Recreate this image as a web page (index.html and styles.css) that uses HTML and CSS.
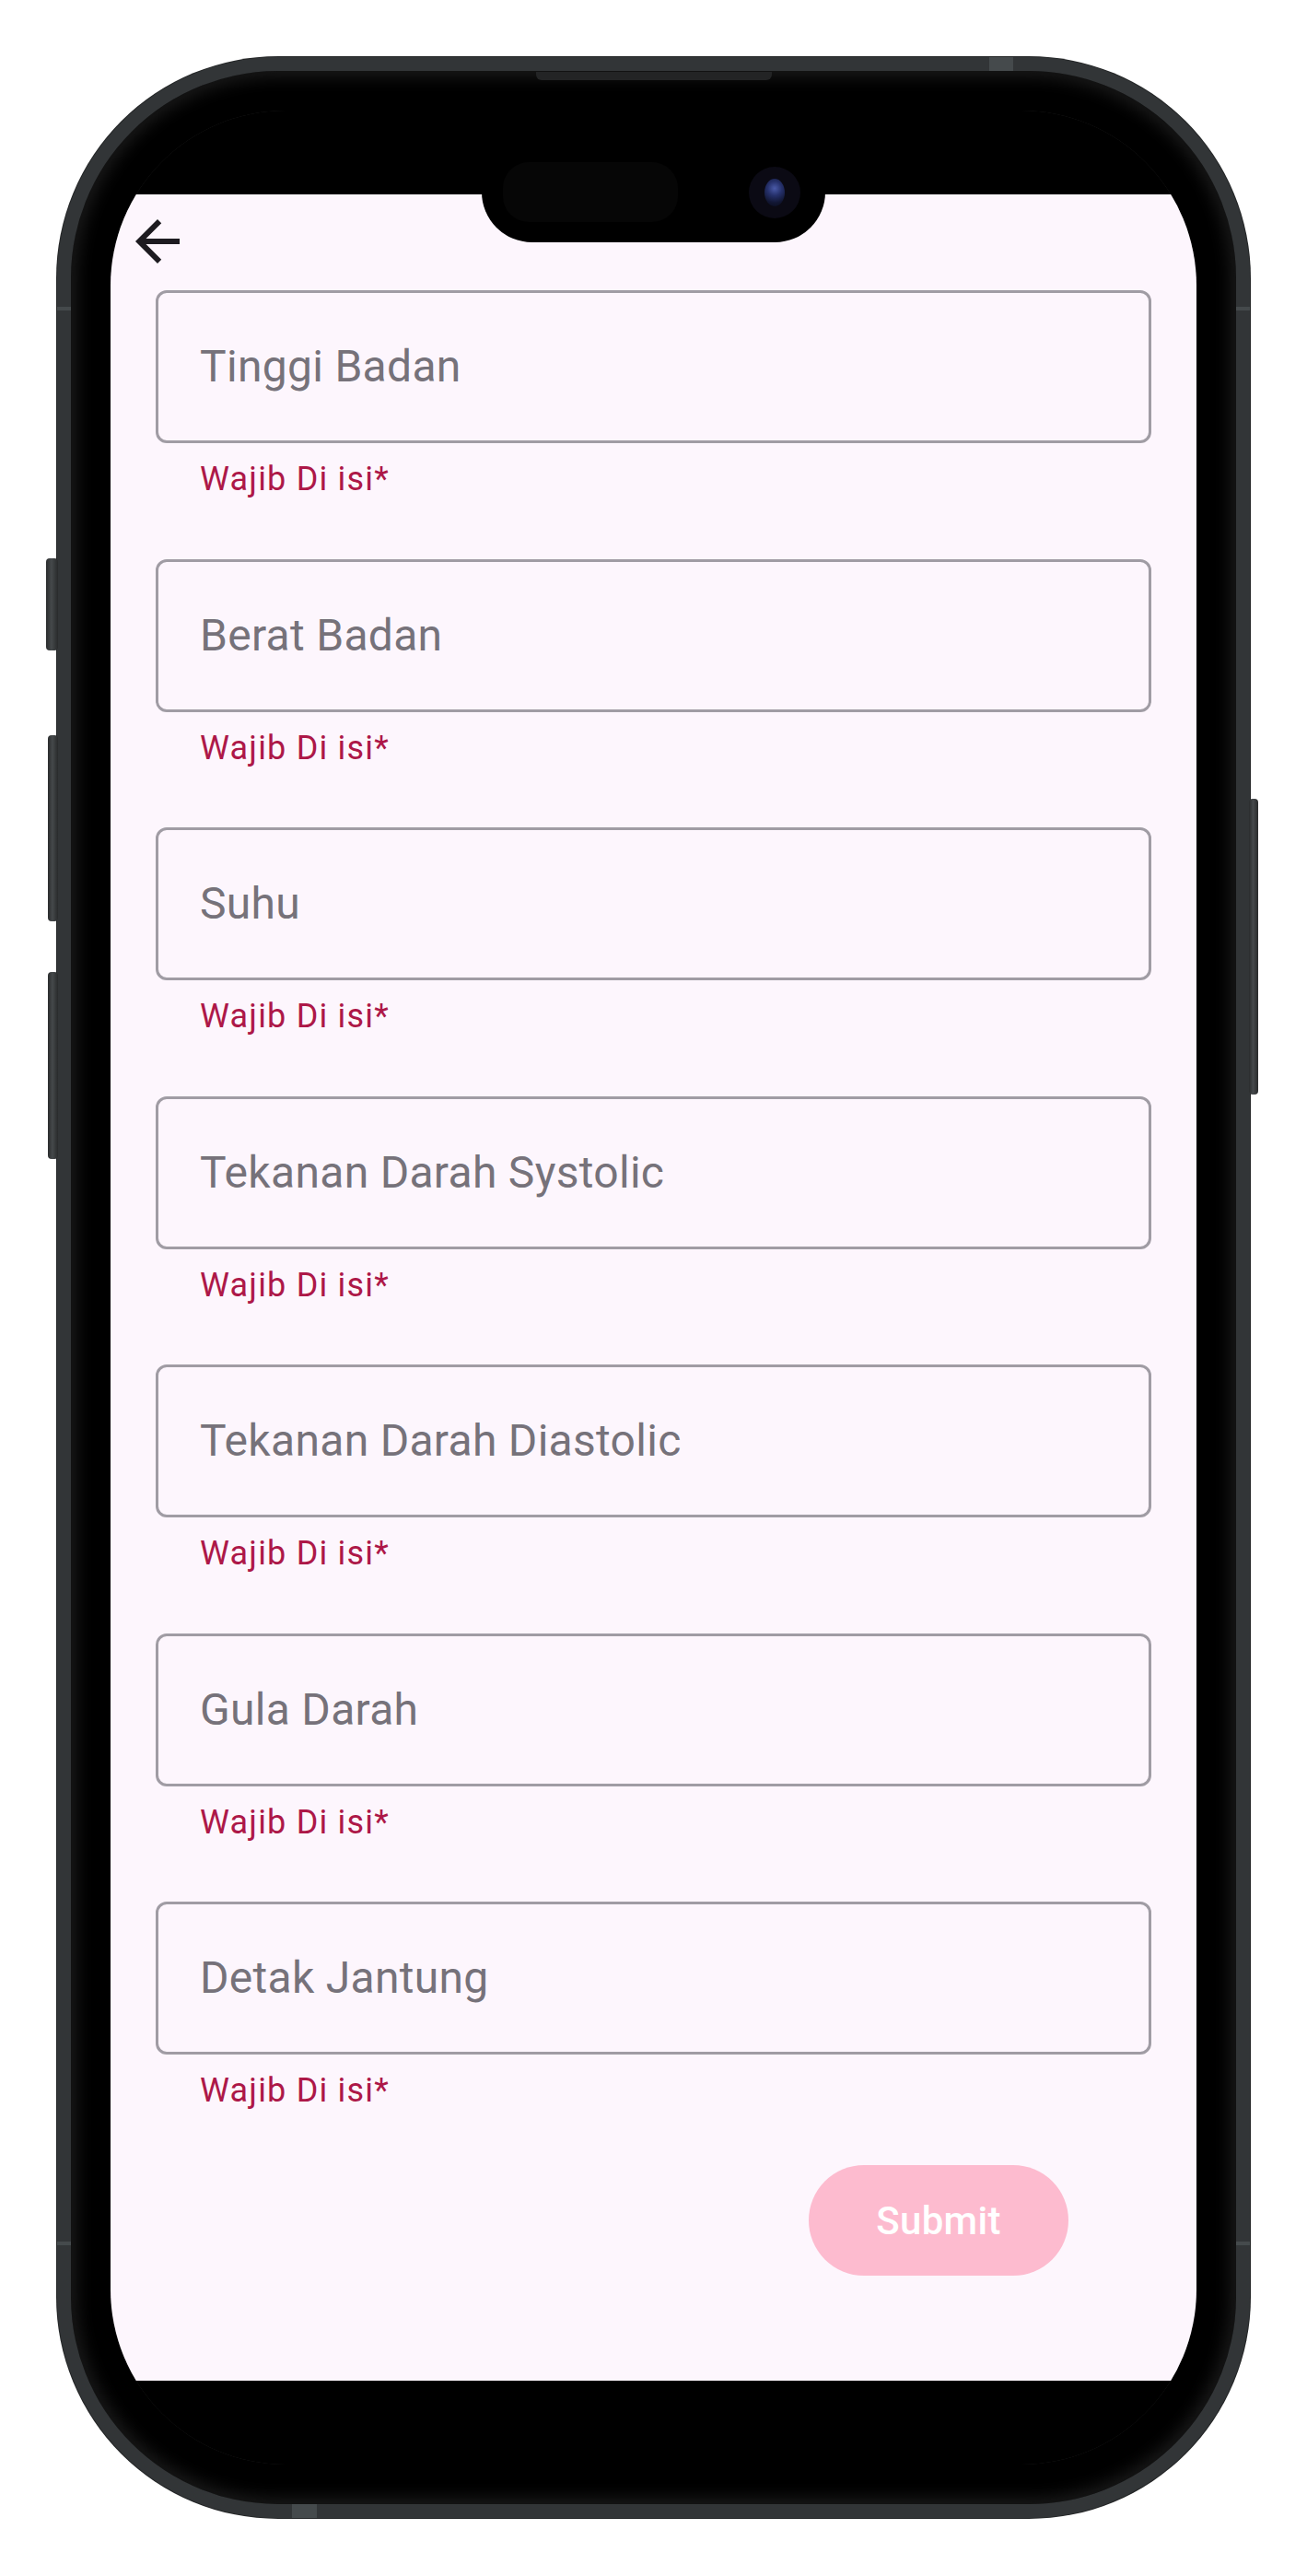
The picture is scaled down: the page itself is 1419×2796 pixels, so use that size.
FILE: index.html
```html
<!DOCTYPE html>
<html lang="id">
<head>
<meta charset="utf-8">
<title>Form</title>
<link rel="stylesheet" href="styles.css">
</head>
<body>
<div class="phone">
  <div class="btn-side btn-action"></div>
  <div class="btn-side btn-vol-up"></div>
  <div class="btn-side btn-vol-down"></div>
  <div class="btn-side btn-power"></div>
  <div class="antenna ant-top"></div>
  <div class="antenna ant-bottom"></div>
  <div class="antenna ant-left1"></div>
  <div class="antenna ant-right1"></div>
  <div class="antenna ant-left2"></div>
  <div class="antenna ant-right2"></div>
  <div class="speaker"></div>
  <div class="display">
    <div class="island">
      <div class="island-sensor"></div>
      <div class="island-cam"><div class="lens"></div></div>
    </div>
    <div class="statusbar"></div>
    <main class="app">
      <div class="topbar">
        <svg class="back" viewBox="0 0 24 24" aria-label="Kembali"><path d="M20 11H7.83l5.59-5.59L12 4l-8 8 8 8 1.41-1.41L7.83 13H20v-2z"/></svg>
      </div>
      <form class="form">
        <div class="group"><div class="field"><span class="label">Tinggi Badan</span></div><div class="support">Wajib Di isi*</div></div>
        <div class="group"><div class="field"><span class="label">Berat Badan</span></div><div class="support">Wajib Di isi*</div></div>
        <div class="group"><div class="field"><span class="label">Suhu</span></div><div class="support">Wajib Di isi*</div></div>
        <div class="group"><div class="field"><span class="label">Tekanan Darah Systolic</span></div><div class="support">Wajib Di isi*</div></div>
        <div class="group"><div class="field"><span class="label">Tekanan Darah Diastolic</span></div><div class="support">Wajib Di isi*</div></div>
        <div class="group"><div class="field"><span class="label">Gula Darah</span></div><div class="support">Wajib Di isi*</div></div>
        <div class="group last"><div class="field"><span class="label">Detak Jantung</span></div><div class="support">Wajib Di isi*</div></div>
        <div class="actions"><button type="button" class="submit">Submit</button></div>
      </form>
    </main>
    <div class="bottombar"></div>
  </div>
</div>
</body>
</html>
```
FILE: styles.css
```css
* { box-sizing: border-box; }
html, body { margin: 0; padding: 0; background: #ffffff; }
body { width: 1419px; height: 2796px; overflow: hidden; font-family: Roboto, "Noto Sans", sans-serif; }

.phone {
  position: relative;
  width: 1295px;
  height: 2671px;
  margin: 62px 0 0 62px;
  background: #000;
  border: 15px solid #323537;
  border-radius: 240px;
  padding: 43px;
  box-shadow: 0 0 0 1px #232526, inset 0 0 0 2px #121212, inset 0 0 18px 6px #1b1b1b;
}

.btn-side {
  position: absolute;
  background: linear-gradient(90deg, #2a2c2d, #45494b 45%, #282a2b);
  border-radius: 4px;
}
.btn-action { left: -27px; top: 529px; width: 13px; height: 100px; }
.btn-vol-up { left: -25px; top: 721px; width: 11px; height: 202px; }
.btn-vol-down { left: -25px; top: 978px; width: 11px; height: 203px; }
.btn-power { right: -24px; top: 790px; width: 10px; height: 321px; }

.antenna { position: absolute; background: #454a4c; }
.ant-top { top: -15px; left: 997px; width: 26px; height: 15px; }
.ant-bottom { bottom: -15px; left: 240px; width: 27px; height: 15px; }
.ant-left1 { left: -15px; top: 256px; width: 15px; height: 4px; }
.ant-right1 { right: -15px; top: 256px; width: 15px; height: 4px; }
.ant-left2 { left: -15px; top: 2356px; width: 15px; height: 4px; }
.ant-right2 { right: -15px; top: 2356px; width: 15px; height: 4px; }

.speaker {
  position: absolute;
  top: 1px;
  left: 505px;
  width: 256px;
  height: 9px;
  background: #232425;
  border-radius: 0 0 6px 6px;
}

.display {
  position: relative;
  width: 1179px;
  height: 2555px;
  border-radius: 190px;
  overflow: hidden;
  background: #000;
  display: flex;
  flex-direction: column;
  box-shadow: inset 0 0 0 1px #2a2a2a;
}

.island {
  position: absolute;
  left: 403px;
  top: 34px;
  width: 373px;
  height: 109px;
  border-radius: 55px;
  background: #000;
  z-index: 2;
}
.island-sensor {
  position: absolute;
  left: 23px;
  top: 22px;
  width: 190px;
  height: 65px;
  border-radius: 28px;
  background: #060606;
}
.island-cam {
  position: absolute;
  left: 290px;
  top: 27px;
  width: 56px;
  height: 56px;
  border-radius: 50%;
  background: #0b0a14;
  display: flex;
  align-items: center;
  justify-content: center;
}
.lens {
  width: 22px;
  height: 30px;
  border-radius: 50%;
  background: radial-gradient(circle at 50% 35%, #4a5aa8 0, #25306a 35%, #111632 70%, #0a0c1c 100%);
}

.statusbar { height: 91px; flex: none; background: #000; }
.bottombar { height: 91px; flex: none; background: #000; }

.app {
  flex: 1;
  background: #fdf6fd;
  padding-top: 15px;
  display: flex;
  flex-direction: column;
}

.topbar { padding-left: 15px; height: 72px; }
.back { width: 72px; height: 72px; display: block; fill: #1d1b20; }

.form {
  margin: 17px 0 0 0;
  padding: 0 49px;
  display: flex;
  flex-direction: column;
}

.group { margin-bottom: 62.5px; }
.group.last { margin-bottom: 0; }

.field {
  height: 166px;
  border: 3px solid #a09ca4;
  border-radius: 12px;
  display: flex;
  align-items: center;
  padding-left: 45px;
}
.label {
  font-size: 48px;
  line-height: 48px;
  color: #76727a;
  letter-spacing: 0.3px;
}
.support {
  margin-top: 15px;
  padding-left: 48px;
  font-size: 36px;
  line-height: 48px;
  color: #ad1848;
  letter-spacing: 1.2px;
}

.actions {
  display: flex;
  justify-content: flex-end;
  margin-top: 57px;
  padding-right: 90px;
}
.submit {
  width: 282px;
  height: 120px;
  border: none;
  border-radius: 60px;
  background: #fdbbcf;
  color: #ffffff;
  font-family: Roboto, "Noto Sans", sans-serif;
  font-size: 42px;
  font-weight: 500;
  letter-spacing: 0.3px;
  padding: 0;
}
```
